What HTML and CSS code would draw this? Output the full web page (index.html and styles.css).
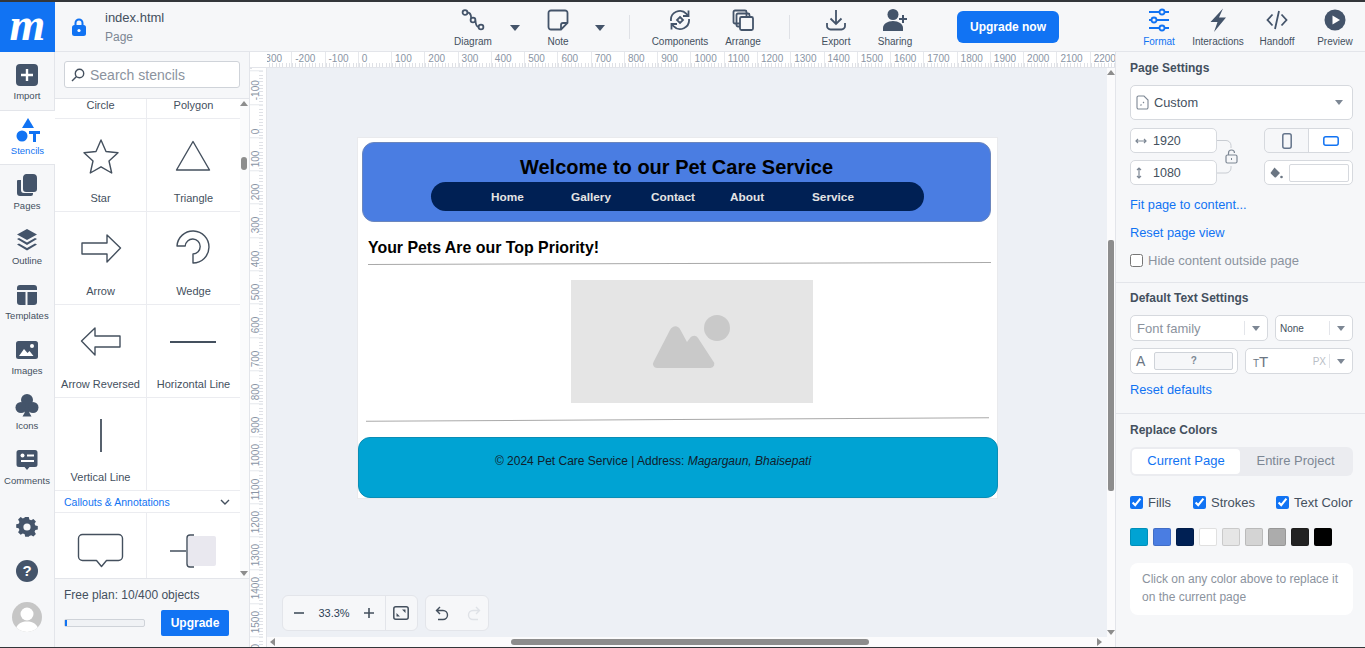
FILE: index.html

```html
<!DOCTYPE html>
<html lang="en">
<head>
  <meta charset="UTF-8">
  <title>index.html - Page</title>
  <link rel="stylesheet" href="styles.css">
</head>
<body>
  <header class="topbar">
    <div class="logo">m</div>
    <div class="file-info">
      <svg class="lock" width="14" height="18" viewBox="0 0 14 18"><path d="M3.5 8V5a3.5 3.5 0 0 1 7 0v3" fill="none" stroke="#1173f3" stroke-width="2"/><rect x="0" y="7" width="14" height="11" rx="2.5" fill="#1173f3"/><circle cx="7" cy="12.5" r="1.6" fill="#fff"/></svg>
      <div>
        <div class="file-name">index.html</div>
        <div class="file-type">Page</div>
      </div>
    </div>
    <div class="tool w50"><svg width="24" height="24" viewBox="0 0 24 24" class="ico"><circle cx="4" cy="4.5" r="2.4"/><circle cx="12" cy="12" r="2.4"/><circle cx="20" cy="19" r="2.4"/><path d="M6.5 4.5c3 0 3.500 2 3.700 5.500M14.400 12.500c.4 4 1.500 6.500 3.200 6.500"/></svg><span>Diagram</span></div>
    <div class="tool-caret w34"><i class="caret big"></i></div>
    <div class="tool w52"><svg width="24" height="24" viewBox="0 0 24 24" class="ico"><path d="M5 2.500h14a2.500 2.500 0 0 1 2.500 2.500v10l-6.500 6.500H5A2.500 2.500 0 0 1 2.500 19V5A2.500 2.500 0 0 1 5 2.500z"/><path d="M21 15h-4a2 2 0 0 0-2 2v4"/></svg><span>Note</span></div>
    <div class="tool-caret w32"><i class="caret big"></i></div>
    <div class="tool-sep first"></div>
    <div class="tool w74"><svg width="24" height="24" viewBox="0 0 24 24" class="ico"><path d="M3 13a9 9 0 0 1 15.500-7.200L20 7.500"/><path d="M20.500 2.500v5.500h-5.500"/><path d="M21 11a9 9 0 0 1-15.500 7.200L4 16.500"/><path d="M3.500 21.500V16H9"/><path d="M12 9l3 3-3 3-3-3z"/></svg><span>Components</span></div>
    <div class="tool w52"><svg width="24" height="24" viewBox="0 0 24 24" class="ico"><rect x="2.500" y="2.500" width="13" height="13" rx="1.500"/><rect x="5.500" y="5.500" width="13" height="13" rx="1.500"/><rect x="9" y="9" width="13" height="13" rx="1.500" fill="#f6f7f9"/></svg><span>Arrange</span></div>
    <div class="tool-sep second"></div>
    <div class="tool w52"><svg width="24" height="24" viewBox="0 0 24 24" class="ico"><path d="M3 15v3a3.500 3.500 0 0 0 3.500 3.500h11A3.500 3.500 0 0 0 21 18v-3"/><path d="M12 2v14M6.500 10.500L12 16l5.500-5.500"/></svg><span>Export</span></div>
    <div class="tool w66"><svg width="24" height="24" viewBox="0 0 24 24" class="ico-fill"><circle cx="10" cy="6.500" r="5.500"/><path d="M0 23v-3c0-4 4.500-7 10-7s10 3 10 7v3z"/><path d="M19 7h2v3h3v2h-3v3h-2v-3h-3v-2h3z"/></svg><span>Sharing</span></div>
    <button class="upgrade-now">Upgrade now</button>
    <div class="tool w50 format active"><svg width="24" height="24" viewBox="0 0 24 24" class="ico blue"><path d="M2 5h10M18 5h4M2 13h2M10 13h12M2 21h10M18 21h4" transform="translate(0 -1)"/><circle cx="15" cy="4" r="2.500"/><circle cx="7" cy="12" r="2.500"/><circle cx="15" cy="20" r="2.500"/></svg><span>Format</span></div>
    <div class="tool w68"><svg width="24" height="24" viewBox="0 0 24 24" class="ico-fill"><path d="M17 .5L4.500 14h7L8 24 20 9.500h-7z"/></svg><span>Interactions</span></div>
    <div class="tool w50"><svg width="24" height="24" viewBox="0 0 24 24" class="ico"><path d="M7.500 6.500L2.500 12l5 5.500M16.500 6.500l5 5.500-5 5.500M14 3l-4 18"/></svg><span>Handoff</span></div>
    <div class="tool w52 preview"><svg width="24" height="24" viewBox="0 0 24 24"><circle cx="12" cy="12" r="10.500" fill="#44546a"/><path d="M9.500 7.500l7.500 4.500-7.500 4.500z" fill="#fff"/></svg><span>Preview</span></div>
  </header>

  <div class="workspace">
    <nav class="rail">
      <div class="rail-item"><svg width="24" height="24" viewBox="0 0 24 24"><rect x="1" y="1" width="22" height="22" rx="4" fill="#44546a"/><path d="M12 6v12M6 12h12" stroke="#fff" stroke-width="2.400"/></svg><span>Import</span></div>
      <div class="rail-item active"><svg width="24" height="24" viewBox="0 0 24 24" fill="#1173f3"><path d="M12 0l6 10H6z"/><circle cx="6" cy="18" r="5.500"/><path d="M13 13h11v3h-4v8h-3v-8h-4z"/></svg><span>Stencils</span></div>
      <div class="rail-item"><svg width="24" height="24" viewBox="0 0 24 24" fill="#44546a"><path d="M3 8h3v10a3 3 0 0 0 3 3h9v1a2 2 0 0 1-2 2H5a3 3 0 0 1-3-3V9a1 1 0 0 1 1-1z" transform="translate(0 -1)"/><path d="M11 1h7a4 4 0 0 1 4 4v11a3 3 0 0 1-3 3h-8a3 3 0 0 1-3-3V5a4 4 0 0 1 3-4z"/></svg><span>Pages</span></div>
      <div class="rail-item"><svg width="24" height="24" viewBox="0 0 24 24" fill="#44546a"><path d="M12 1l10 5.500-10 5.500L2 6.500z"/><path d="M2 11l2-1 8 4.500 8-4.500 2 1-10 6z"/><path d="M2 16.500l2-1 8 4.500 8-4.500 2 1-10 6z"/></svg><span>Outline</span></div>
      <div class="rail-item"><svg width="24" height="24" viewBox="0 0 24 24" fill="#44546a"><path d="M5 2h14a3 3 0 0 1 3 3v2H2V5a3 3 0 0 1 3-3z"/><path d="M2 9h8.500v13H5a3 3 0 0 1-3-3z"/><path d="M12.500 9H22v10a3 3 0 0 1-3 3h-6.500z"/></svg><span>Templates</span></div>
      <div class="rail-item"><svg width="24" height="24" viewBox="0 0 24 24"><rect x="1" y="3" width="22" height="18" rx="2.500" fill="#44546a"/><path d="M4 18l5-7 3.500 4 2-2 4 5z" fill="#fff"/><circle cx="17" cy="8" r="2" fill="#fff"/></svg><span>Images</span></div>
      <div class="rail-item"><svg width="24" height="24" viewBox="0 0 24 24" fill="#44546a"><circle cx="12" cy="7" r="6"/><circle cx="6" cy="14.500" r="5.500"/><circle cx="18" cy="14.500" r="5.500"/><path d="M10.500 12h3l1 8 2 3.500h-9l2-3.500z"/></svg><span>Icons</span></div>
      <div class="rail-item"><svg width="24" height="24" viewBox="0 0 24 24"><path d="M4 2h16a2.500 2.500 0 0 1 2.500 2.500v12A2.500 2.500 0 0 1 20 19h-5.500L12 22l-2.500-3H4a2.500 2.500 0 0 1-2.500-2.500v-12A2.500 2.500 0 0 1 4 2z" fill="#44546a"/><circle cx="7.500" cy="7.500" r="2" fill="#fff"/><path d="M12 7.500h7M6 13h13" stroke="#fff" stroke-width="2"/></svg><span>Comments</span></div>
      <div class="rail-icon"><svg width="24" height="24" viewBox="0 0 24 24"><path d="M10 2h4l.6 2.800 2 .9 2.500-1.500 2.800 2.800-1.500 2.500.9 2 2.700.5v4l-2.700.6-.9 2 1.500 2.500-2.800 2.800-2.500-1.500-2 .8L14 24h-4l-.6-2.800-2-.8-2.500 1.500-2.800-2.800 1.500-2.500-.9-2L0 14.100v-4l2.700-.5.900-2L2.100 5l2.800-2.800 2.500 1.500 2-.9z" transform="translate(1.200 .1) scale(.9)" fill="#44546a"/><circle cx="12" cy="12" r="3.600" fill="#f6f7f9"/></svg></div>
      <div class="rail-icon"><div class="help">?</div></div>
      <div class="avatar"><svg width="30" height="30" viewBox="0 0 30 30"><circle cx="15" cy="12" r="6.500" fill="#fff"/><path d="M3 30c1-8 6-10.500 12-10.500S26 22 27 30z" fill="#fff"/></svg></div>
    </nav>

    <aside class="stencils">
      <div class="search-wrap">
        <div class="search">
          <svg width="14" height="14" viewBox="0 0 14 14" fill="none" stroke="#44505e" stroke-width="1.400"><circle cx="8.500" cy="5.500" r="4.200"/><path d="M5.500 8.500L1 13"/></svg>
          <span>Search stencils</span>
        </div>
      </div>
      <div class="stencil-list">
        <div class="stencil-grid">
          <div class="cell short"><span>Circle</span></div>
          <div class="cell short"><span>Polygon</span></div>
          <div class="cell"><svg width="60" height="60" viewBox="0 0 60 60" class="shape"><path d="M30 14l5 11.500 12 1.200-9 8.300 2.700 12L30 40.800 19.300 47 22 35l-9-8.300 12-1.200z"/></svg><span>Star</span></div>
          <div class="cell"><svg width="60" height="60" viewBox="0 0 60 60" class="shape"><path d="M30 15.500L46.500 44h-33z" transform="translate(-1 0)"/></svg><span>Triangle</span></div>
          <div class="cell"><svg width="60" height="60" viewBox="0 0 60 60" class="shape"><path d="M11 24h25v-8l13.500 13L36 43v-8H11z"/></svg><span>Arrow</span></div>
          <div class="cell"><svg width="60" height="60" viewBox="0 0 60 60" class="shape"><path d="M14 27a16 16 0 1 1 16 17v-9a7.500 7.500 0 1 0-7.800-8z" transform="translate(-1 0)"/></svg><span>Wedge</span></div>
          <div class="cell"><svg width="60" height="60" viewBox="0 0 60 60" class="shape"><path d="M49 24H24v-8L10.500 29 24 43v-8h25z"/></svg><span>Arrow Reversed</span></div>
          <div class="cell"><svg width="60" height="60" viewBox="0 0 60 60" class="shape thick"><path d="M6 30h46"/></svg><span>Horizontal Line</span></div>
          <div class="cell"><svg width="60" height="60" viewBox="0 0 60 60" class="shape thick"><path d="M30 14v33"/></svg><span>Vertical Line</span></div>
          <div class="cell"></div>
        </div>
        <div class="group-head">
          <span>Callouts &amp; Annotations</span>
          <svg width="10" height="6" viewBox="0 0 10 6" fill="none" stroke="#44505e" stroke-width="1.400"><path d="M1 1l4 4 4-4"/></svg>
        </div>
        <div class="stencil-grid">
          <div class="cell"><svg width="60" height="60" viewBox="0 0 60 60" class="shape"><path d="M12 14h36a4 4 0 0 1 4 4v18a4 4 0 0 1-4 4H36l-5 6-5-6H12a4 4 0 0 1-4-4V18a4 4 0 0 1 4-4z" transform="translate(-.500 .500)"/></svg></div>
          <div class="cell"><svg width="60" height="60" viewBox="0 0 60 60" class="shape"><rect x="24" y="16" width="28" height="30" rx="2" fill="#e9e8ef" stroke="none"/><path d="M6 31h16M30 15h-4a3 3 0 0 0-3 3v26a3 3 0 0 0 3 3h4"/></svg></div>
        </div>
        <div class="list-scroll">
          <i class="arrow-up"></i>
          <div class="list-thumb"></div>
          <i class="arrow-down"></i>
        </div>
      </div>
      <div class="plan">
        <div class="plan-text">Free plan: 10/400 objects</div>
        <div class="plan-row">
          <div class="progress"><div class="progress-fill"></div></div>
          <button class="upgrade">Upgrade</button>
        </div>
      </div>
    </aside>

    <main class="canvas-area">
      <div class="corner"></div>
      <div class="ruler-x">
        <b>-300</b><b>-200</b><b>-100</b><b>0</b><b>100</b><b>200</b><b>300</b><b>400</b><b>500</b><b>600</b><b>700</b><b>800</b><b>900</b><b>1000</b><b>1100</b><b>1200</b><b>1300</b><b>1400</b><b>1500</b><b>1600</b><b>1700</b><b>1800</b><b>1900</b><b>2000</b><b>2100</b><b>2200</b>
      </div>
      <div class="ruler-y">
        <b></b><b>-100</b><b>0</b><b>100</b><b>200</b><b>300</b><b>400</b><b>500</b><b>600</b><b>700</b><b>800</b><b>900</b><b>1000</b><b>1100</b><b>1200</b><b>1300</b><b>1400</b><b>1500</b><b>1600</b>
      </div>
      <div class="viewport">
        <div class="page">
          <div class="site-header">
            <h1>Welcome to our Pet Care Service</h1>
            <div class="site-nav"><a>Home</a><a>Gallery</a><a>Contact</a><a>About</a><a>Service</a></div>
          </div>
          <h2>Your Pets Are our Top Priority!</h2>
          <div class="rule first"></div>
          <div class="placeholder">
            <svg width="80" height="56" viewBox="0 0 80 56"><circle cx="65" cy="15" r="13" fill="#c9c9c9"/><path d="M5 55a4 4 0 0 1-3.500-6L18 17c3-5 8-5 10.500 0l6.500 12 3-4c2.500-3 6-3 8 0l15 23a4 4 0 0 1-3 7z" fill="#c9c9c9"/></svg>
          </div>
          <div class="rule second"></div>
          <div class="site-footer">© 2024 Pet Care Service | Address: <em>Magargaun, Bhaisepati</em></div>
        </div>
        <div class="zoom-box">
          <div class="zoom-group">
            <span class="zoom-btn"><svg width="12" height="12" viewBox="0 0 12 12" stroke="#44505e" stroke-width="1.600"><path d="M1 6h10"/></svg></span>
            <span class="zoom-value">33.3%</span>
            <span class="zoom-btn"><svg width="12" height="12" viewBox="0 0 12 12" stroke="#44505e" stroke-width="1.600"><path d="M1 6h10M6 1v10"/></svg></span>
            <span class="zoom-fit"><svg width="16" height="14" viewBox="0 0 16 14"><rect x=".8" y=".8" width="14.400" height="12.400" rx="2" fill="none" stroke="#44505e" stroke-width="1.500"/><path d="M9 3.500h3.500V7zM7 10.500H3.500V7z" fill="#44505e"/></svg></span>
          </div>
          <div class="undo-group">
            <svg width="14" height="15" viewBox="0 0 14 15" fill="none" stroke="#44505e" stroke-width="1.400"><path d="M5 1L1.500 4.500 5 8M2 4.500h6a4.500 4.500 0 0 1 0 9H3"/></svg>
            <svg width="14" height="15" viewBox="0 0 14 15" fill="none" stroke="#dfe2e7" stroke-width="1.400"><path d="M9 1l3.500 3.500L9 8M12 4.500H6a4.500 4.500 0 0 0 0 9h5"/></svg>
          </div>
        </div>
      </div>
      <div class="scroll-y">
        <i class="arrow-up"></i>
        <div class="scroll-y-thumb"></div>
        <i class="arrow-down"></i>
      </div>
      <div class="scroll-x">
        <i class="arrow-left"></i>
        <div class="scroll-x-thumb"></div>
        <i class="arrow-right"></i>
      </div>
    </main>

    <aside class="props">
      <section class="props-section page-settings">
        <h3>Page Settings</h3>
        <div class="field select-custom">
          <svg width="13" height="15" viewBox="0 0 13 15" fill="none" stroke="#7d8794" stroke-width="1.100"><path d="M2.500 1h5.500l4 4v7.500a1.500 1.500 0 0 1-1.500 1.500h-8A1.500 1.500 0 0 1 1 12.500v-10A1.500 1.500 0 0 1 2.500 1z"/><path d="M4.500 10.500l1-1M7 8l1-1"/></svg>
          <span>Custom</span>
          <i class="caret small push"></i>
        </div>
        <div class="size-grid">
          <div class="field size"><svg width="12" height="8" viewBox="0 0 12 8" fill="none" stroke="#7d8794" stroke-width="1.200"><path d="M1 4h10M3 2L1 4l2 2M9 2l2 2-2 2"/></svg><span>1920</span></div>
          <div class="lock-col">
            <svg width="47" height="57" viewBox="0 0 47 57" fill="none" stroke="#c8ccd2"><path d="M0 12.500h9a5 5 0 0 1 5 5V20M14 38v2a5 5 0 0 1-5 5H0"/><rect x="9" y="27" width="11" height="8" rx="1.500" stroke="#7d8794" stroke-width="1.200"/><path d="M11.500 27v-2a3 3 0 0 1 6 0" stroke="#7d8794" stroke-width="1.200"/><path d="M14.500 30v2" stroke="#7d8794"/></svg>
          </div>
          <div class="orient">
            <span class="orient-btn"><svg width="10" height="16" viewBox="0 0 10 16" fill="none" stroke="#64748b" stroke-width="1.500"><rect x=".8" y=".8" width="8.400" height="14.400" rx="2"/></svg></span>
            <span class="orient-btn on"><svg width="16" height="10" viewBox="0 0 16 10" fill="none" stroke="#1173f3" stroke-width="1.500"><rect x=".8" y=".8" width="14.400" height="8.400" rx="2"/></svg></span>
          </div>
          <div class="field size"><svg width="8" height="12" viewBox="0 0 8 12" fill="none" stroke="#7d8794" stroke-width="1.200"><path d="M4 1v10M2 3l2-2 2 2M2 9l2 2 2-2"/></svg><span class="h-value">1080</span></div>
          <div class="field fill-row">
            <svg width="13" height="12" viewBox="0 0 13 12"><path d="M4.500 .5l5.500 5.500-4 4.200a1 1 0 0 1-1.400 0L1 6.700a1 1 0 0 1 0-1.400z" fill="#6b7683"/><circle cx="11.500" cy="10" r="1.300" fill="#6b7683"/></svg>
            <div class="fill-swatch"></div>
          </div>
        </div>
        <a class="link">Fit page to content...</a>
        <a class="link">Reset page view</a>
        <label class="check muted"><input type="checkbox">Hide content outside page</label>
      </section>

      <section class="props-section text-settings">
        <h3>Default Text Settings</h3>
        <div class="text-row">
          <div class="field font-family"><span>Font family</span><i class="field-sep"></i><i class="caret small"></i></div>
          <div class="field font-none"><span>None</span><i class="field-sep"></i><i class="caret small"></i></div>
        </div>
        <div class="text-row">
          <div class="field color-a"><span class="big-a">A</span><div class="q-box">?</div></div>
          <div class="field size-t"><span class="big-t"><small>T</small>T</span><span class="px">PX</span><i class="field-sep"></i><i class="caret small"></i></div>
        </div>
        <a class="link">Reset defaults</a>
      </section>

      <section class="props-section colors">
        <h3>Replace Colors</h3>
        <div class="segment"><span class="seg on">Current Page</span><span class="seg">Entire Project</span></div>
        <div class="check-row">
          <label class="check"><input type="checkbox" checked>Fills</label>
          <label class="check"><input type="checkbox" checked>Strokes</label>
          <label class="check"><input type="checkbox" checked>Text Color</label>
        </div>
        <div class="swatches">
          <i style="background:#00a3d3"></i><i style="background:#4a7de2"></i><i style="background:#002054"></i><i style="background:#ffffff"></i><i style="background:#e6e6e6"></i><i style="background:#d4d4d4"></i><i style="background:#acacac"></i><i style="background:#222222"></i><i style="background:#000000"></i>
        </div>
        <div class="hint">Click on any color above to replace it on the current page</div>
      </section>
    </aside>
  </div>
</body>
</html>
```

FILE: styles.css

```css
* {
  box-sizing: border-box;
}
html, body {
  margin: 0;
  height: 100%;
  overflow: hidden;
}
body {
  display: flex;
  flex-direction: column;
  border-top: 2px solid #33363a;
  border-bottom: 1px solid #33363a;
  background: #f6f7f9;
  color: #44505e;
  font-family: "Liberation Sans", Arial, sans-serif;
}
svg {
  display: block;
}

/* top bar */
.topbar {
  display: flex;
  flex: none;
  height: 50px;
  border-bottom: 1px solid #e3e5ea;
}
.logo {
  width: 55px;
  height: 50px;
  background: #1173f3;
  color: #fff;
  font: italic bold 46px/46px "Liberation Serif", serif;
  text-align: center;
}
.file-info {
  display: flex;
  align-items: center;
  width: 393px;
  padding-left: 17px;
}
.lock {
  margin-right: 19px;
}
.file-name {
  font-size: 13px;
  line-height: 17px;
}
.file-type {
  margin-top: 4px;
  font-size: 12px;
  line-height: 15px;
  color: #7d8794;
}
.tool {
  display: flex;
  flex-direction: column;
  align-items: center;
  padding-top: 6px;
  font-size: 10px;
  white-space: nowrap;
}
.tool span {
  margin-top: 4px;
  line-height: 12px;
}
.tool.active {
  color: #1173f3;
}
.w32 { width: 32px; }
.w34 { width: 34px; }
.w50 { width: 50px; }
.w52 { width: 52px; }
.w66 { width: 66px; }
.w68 { width: 68px; }
.w74 { width: 74px; }
.ico {
  fill: none;
  stroke: #44546a;
  stroke-width: 1.800;
}
.ico.blue {
  stroke: #1173f3;
}
.ico-fill {
  fill: #44546a;
}
.tool-caret {
  display: flex;
  justify-content: center;
  padding-top: 23px;
}
.caret {
  display: block;
  width: 0;
  height: 0;
  border-left: 4px solid transparent;
  border-right: 4px solid transparent;
  border-top: 5px solid #7d8794;
}
.caret.big {
  border-left-width: 5px;
  border-right-width: 5px;
  border-top: 6px solid #44546a;
}
.tool-sep {
  width: 1px;
  height: 24px;
  margin-top: 13px;
  background: #dfe1e6;
}
.tool-sep.first {
  margin-left: 13px;
  margin-right: 13px;
}
.tool-sep.second {
  margin-left: 20px;
  margin-right: 20px;
}
.upgrade-now {
  width: 102px;
  height: 32px;
  margin: 9px 75px 0 29px;
  border: none;
  border-radius: 6px;
  background: #1173f3;
  color: #fff;
  font: bold 12px "Liberation Sans", Arial, sans-serif;
}
.preview {
  margin-left: 7px;
}

/* main columns */
.workspace {
  display: flex;
  flex: 1;
  min-height: 0;
}
.rail {
  flex: none;
  width: 55px;
  padding-top: 3px;
  border-right: 1px solid #e3e5ea;
}
.rail-item {
  display: flex;
  flex-direction: column;
  align-items: center;
  height: 55px;
  padding-top: 8px;
  font-size: 9.500px;
  white-space: nowrap;
}
.rail-item span {
  margin-top: 3px;
  line-height: 12px;
}
.rail-item.active {
  width: 55px;
  margin-right: -1px;
  background: #fff;
  border-top: 1px solid #e3e5ea;
  border-bottom: 1px solid #e3e5ea;
  padding-top: 7px;
  color: #1173f3;
}
.rail-icon {
  display: flex;
  justify-content: center;
  margin-top: 20px;
}
.help {
  width: 22px;
  height: 22px;
  margin-top: 1px;
  border-radius: 50%;
  background: #44546a;
  color: #fff;
  font-size: 15px;
  font-weight: bold;
  line-height: 22px;
  text-align: center;
}
.avatar {
  width: 30px;
  height: 30px;
  margin: 20px 0 0 12px;
  border-radius: 50%;
  background: #c6c6c6;
  overflow: hidden;
}

/* stencils panel */
.stencils {
  display: flex;
  flex: none;
  flex-direction: column;
  width: 195px;
  border-right: 1px solid #e3e5ea;
  background: #fff;
}
.search-wrap {
  height: 47px;
  padding: 9px 9px 0;
  background: #f6f7f9;
  border-bottom: 1px solid #e3e5ea;
}
.search {
  display: flex;
  align-items: center;
  gap: 5px;
  width: 176px;
  height: 27px;
  padding-left: 6px;
  border: 1px solid #cfd3d9;
  border-radius: 3px;
  background: #fff;
  color: #8b939e;
  font-size: 14px;
}
.stencil-list {
  position: relative;
  flex: 1;
  min-height: 0;
  overflow: hidden;
}
.stencil-grid {
  display: grid;
  grid-template-columns: 92px 93px;
  width: 185px;
}
.cell {
  display: flex;
  flex-direction: column;
  align-items: center;
  height: 93px;
  padding-top: 7px;
  border-bottom: 1px solid #ebecf0;
  font-size: 11px;
  line-height: 12px;
  white-space: nowrap;
}
.cell:nth-child(odd) {
  border-right: 1px solid #ebecf0;
}
.cell span {
  margin-top: 6px;
}
.cell.short {
  height: 20px;
  padding-top: 0;
}
.cell.short span {
  margin-top: 0;
}
.shape {
  fill: none;
  stroke: #44505e;
  stroke-width: 1.400;
  stroke-linejoin: round;
}
.shape.thick {
  stroke-width: 1.800;
}
.group-head {
  display: flex;
  align-items: center;
  justify-content: space-between;
  width: 185px;
  height: 22px;
  padding: 0 10px 0 9px;
  border-bottom: 1px solid #ebecf0;
  color: #1173f3;
  font-size: 10.500px;
}
.list-scroll {
  position: absolute;
  top: 0;
  right: 0;
  bottom: 0;
  width: 9px;
  background: #fbfbfc;
}
.list-thumb {
  position: absolute;
  top: 58px;
  left: 1px;
  width: 6px;
  height: 13px;
  border-radius: 3px;
  background: #8d8d8d;
}
.arrow-up,
.arrow-down,
.arrow-left,
.arrow-right {
  position: absolute;
  width: 0;
  height: 0;
  border: 4px solid transparent;
}
.arrow-up {
  top: 2px;
  left: 0;
  border-top: none;
  border-bottom: 5px solid #8d8d8d;
}
.arrow-down {
  bottom: 2px;
  left: 0;
  border-bottom: none;
  border-top: 5px solid #8d8d8d;
}
.arrow-left {
  top: 1px;
  left: 3px;
  border-left: none;
  border-right: 5px solid #8d8d8d;
}
.arrow-right {
  top: 1px;
  right: 13px;
  border-right: none;
  border-left: 5px solid #8d8d8d;
}
.plan {
  flex: none;
  height: 69px;
  padding: 9px 0 0 9px;
  background: #f6f7f9;
  border-top: 1px solid #e3e5ea;
}
.plan-text {
  font-size: 12px;
  line-height: 14px;
}
.plan-row {
  display: flex;
  align-items: center;
  margin-top: 8px;
}
.progress {
  width: 81px;
  height: 8px;
  border: 1px solid #cfd3d9;
  border-radius: 2px;
  background: #f0f2f5;
}
.progress-fill {
  width: 2px;
  height: 6px;
  background: #1173f3;
}
.upgrade {
  width: 68px;
  height: 26px;
  margin-left: 16px;
  border: none;
  border-radius: 2px;
  background: #1173f3;
  color: #fff;
  font: bold 12px "Liberation Sans", Arial, sans-serif;
}

/* canvas with rulers */
.canvas-area {
  display: grid;
  flex: 1;
  grid-template-columns: 17px 1fr 8px;
  grid-template-rows: 16px 1fr 10px;
  min-width: 0;
  background: #edf0f5;
}
.corner {
  background: #fff;
  border-bottom: 1px solid #e3e5ea;
}
.ruler-x {
  display: flex;
  overflow: hidden;
  background: #fff;
  border-bottom: 1px solid #e3e5ea;
  grid-column: 2 / 4;
}
.ruler-x b {
  flex: none;
  width: 33.280px;
  padding: 1px 0 0 3px;
  border-left: 1px solid #e6e8ec;
  color: #8a95a5;
  font-size: 10px;
  font-weight: normal;
  line-height: 11px;
  background: repeating-linear-gradient(90deg, #dfe1e6 0 1px, transparent 1px 3.328px) 0 100% / 100% 4px no-repeat;
}
.ruler-x b:first-child {
  margin-left: -9px;
}
.ruler-y {
  grid-row: 2 / 4;
  overflow: hidden;
  background: #fff;
  border-right: 1px solid #e3e5ea;
}
.ruler-y b {
  display: block;
  height: 33.280px;
  padding: 3px 0 0 2px;
  border-bottom: 1px solid #e6e8ec;
  color: #8a95a5;
  font-size: 10px;
  font-weight: normal;
  line-height: 11px;
  writing-mode: vertical-rl;
  transform: rotate(180deg);
  background: repeating-linear-gradient(0deg, #dfe1e6 0 1px, transparent 1px 3.328px) 0 0 / 4px 100% no-repeat;
}
.ruler-y b:first-child {
  margin-top: -30.900px;
}
.viewport {
  position: relative;
  overflow: hidden;
}
.page {
  position: absolute;
  left: 91px;
  top: 70px;
  width: 639px;
  height: 360px;
  padding: 4px 6px 0 4px;
  background: #fff;
  box-shadow: 0 0 0 1px #e9eaed;
  color: #000;
}
.site-header {
  height: 80px;
  padding-top: 13px;
  border: 1px solid #6b86bd;
  border-radius: 12px;
  background: #4a7de2;
  text-align: center;
}
h1 {
  margin: 0;
  font-size: 20px;
  line-height: 23px;
}
.site-nav {
  display: grid;
  grid-template-columns: 80px 80px 79px 82px auto;
  align-items: center;
  width: 493px;
  height: 29px;
  margin: 3px 0 0 68px;
  padding-left: 60px;
  border-radius: 15px;
  background: #002054;
  color: #e4e4e4;
  font-size: 11.800px;
  font-weight: bold;
  text-align: left;
}
h2 {
  margin: 16px 0 0 6px;
  font-size: 15.900px;
  line-height: 20px;
}
.rule {
  height: 1px;
  background: #a9a9a9;
}
.rule.first {
  margin: 5px 0 0 6px;
  transform: rotate(-0.2deg);
}
.rule.second {
  margin: 16px 2px 0 4px;
  transform: rotate(-0.3deg);
}
.placeholder {
  display: flex;
  align-items: flex-end;
  justify-content: center;
  width: 242px;
  height: 123px;
  margin: 16px 0 0 209px;
  padding: 0 0 34px 0;
  background: #e5e5e5;
}
.site-footer {
  width: 640px;
  height: 61px;
  margin: 17px 0 0 -4px;
  padding: 16px 50px 0 0;
  border: 1px solid #0a8db5;
  border-radius: 12px;
  background: #00a3d3;
  color: #11202c;
  font-size: 12px;
  line-height: 14px;
  text-align: center;
}

/* floating zoom controls */
.zoom-box {
  position: absolute;
  left: 15px;
  top: 527px;
  display: flex;
  gap: 7px;
}
.zoom-group,
.undo-group {
  display: flex;
  align-items: center;
  height: 36px;
  border: 1px solid #e3e5ea;
  border-radius: 6px;
  background: #f6f7f9;
}
.zoom-group {
  width: 136px;
  padding-left: 10px;
}
.zoom-btn {
  flex: none;
  width: 12px;
}
.zoom-value {
  width: 58px;
  color: #2c3f56;
  font-size: 11px;
  text-align: center;
}
.zoom-fit {
  height: 34px;
  margin-left: 10px;
  padding: 10px 0 0 7px;
  border-left: 1px solid #e3e5ea;
}
.undo-group {
  gap: 18px;
  width: 64px;
  padding-left: 9px;
}
.scroll-y {
  position: relative;
  background: #fbfbfc;
}
.scroll-y-thumb {
  position: absolute;
  top: 172px;
  left: 1px;
  width: 6px;
  height: 251px;
  border-radius: 2px;
  background: #8d8d8d;
}
.scroll-x {
  position: relative;
  grid-column: 2 / 4;
  background: #fbfbfc;
}
.scroll-x-thumb {
  position: absolute;
  top: 2px;
  left: 244px;
  width: 358px;
  height: 6px;
  border-radius: 3px;
  background: #8d8d8d;
}

/* right panel */
.props {
  flex: none;
  width: 250px;
  border-left: 1px solid #e3e5ea;
  font-size: 12px;
}
.props-section {
  padding: 0 12px 0 14px;
  border-bottom: 1px solid #e3e5ea;
}
.props-section:last-child {
  border-bottom: none;
}
h3 {
  margin: 0;
  font-size: 12px;
  line-height: 14px;
}
.page-settings {
  height: 231px;
  padding-top: 9px;
}
.text-settings {
  height: 131px;
  padding-top: 8px;
}
.colors {
  padding-top: 9px;
}
.field {
  display: flex;
  align-items: center;
  border: 1px solid #d6d9de;
  border-radius: 5px;
  background: #fff;
}
.select-custom {
  gap: 5px;
  height: 35px;
  margin-top: 10px;
  padding: 0 9px 0 5px;
  font-size: 12.800px;
}
.push {
  margin-left: auto;
}
.size-grid {
  display: grid;
  grid-template-columns: 87px 47px 89px;
  grid-template-rows: 25px 25px;
  row-gap: 7px;
  margin-top: 8px;
}
.size {
  gap: 6px;
  padding-left: 4px;
  font-size: 12.500px;
}
.h-value {
  margin-left: 4px;
}
.lock-col {
  grid-row: 1 / 3;
  grid-column: 2;
}
.orient {
  display: flex;
  overflow: hidden;
  border: 1px solid #d6d9de;
  border-radius: 5px;
}
.orient-btn {
  display: flex;
  flex: 1;
  align-items: center;
  justify-content: center;
}
.orient-btn.on {
  border-left: 1px solid #d6d9de;
  background: #fff;
}
.fill-row {
  gap: 6px;
  padding-left: 5px;
}
.fill-swatch {
  width: 60px;
  height: 18px;
  border: 1px solid #d6d9de;
  border-radius: 2px;
}
.link {
  display: block;
  color: #1173f3;
  font-size: 12.800px;
  line-height: 15px;
}
.page-settings .link {
  margin-top: 13px;
}
.size-grid + .link {
  margin-top: 12px;
}
.check {
  display: flex;
  align-items: center;
  font-size: 13px;
  line-height: 15px;
  white-space: nowrap;
}
.check input {
  width: 13px;
  height: 13px;
  margin: 0 5px 0 0;
  accent-color: #1173f3;
}
.check.muted {
  margin-top: 13px;
  color: #8b939e;
}
.text-row {
  display: flex;
  gap: 7px;
  margin-top: 7px;
}
.text-settings h3 + .text-row {
  margin-top: 10px;
}
.text-row .field {
  height: 26px;
}
.font-family {
  width: 138px;
  padding: 0 7px 0 6px;
  color: #8b939e;
  font-size: 13px;
}
.font-none {
  width: 78px;
  padding: 0 7px 0 4px;
  font-size: 10px;
}
.field-sep {
  width: 1px;
  height: 14px;
  margin: 0 7px 0 auto;
  background: #e3e5ea;
}
.color-a {
  gap: 9px;
  width: 108px;
  padding-left: 5px;
}
.big-a {
  color: #6b7683;
  font-size: 14px;
}
.q-box {
  width: 79px;
  height: 18px;
  border: 1px solid #cfd3d9;
  border-radius: 2px;
  background: #f6f7f9;
  color: #7d8794;
  font-size: 10px;
  font-weight: bold;
  line-height: 16px;
  text-align: center;
}
.size-t {
  width: 108px;
  padding: 0 7px 0 7px;
}
.big-t {
  color: #6b7683;
  font-size: 15px;
}
.big-t small {
  font-size: 10px;
}
.px {
  margin-left: auto;
  color: #b9bec6;
  font-size: 10px;
}
.px + .field-sep {
  margin-left: 3px;
}
.text-settings .link {
  margin-top: 8px;
}
.segment {
  display: flex;
  width: 223px;
  height: 29px;
  margin-top: 10px;
  padding: 2px;
  border-radius: 6px;
  background: #ebecf0;
  font-size: 13px;
}
.seg {
  flex: 1;
  color: #7d8794;
  line-height: 24px;
  text-align: center;
}
.seg.on {
  flex: none;
  width: 108px;
  border-radius: 4px;
  background: #fff;
  color: #1173f3;
}
.check-row {
  display: flex;
  margin-top: 19px;
}
.check-row .check:nth-child(1) {
  width: 63px;
}
.check-row .check:nth-child(2) {
  width: 83px;
}
.swatches {
  display: flex;
  gap: 5px;
  margin-top: 18px;
}
.swatches i {
  width: 18px;
  height: 18px;
  border: 1px solid rgba(0, 0, 0, 0.12);
  border-radius: 2px;
}
.hint {
  width: 223px;
  height: 52px;
  margin-top: 17px;
  padding: 7px 12px;
  border-radius: 8px;
  background: #fff;
  color: #8b939e;
  font-size: 12px;
  line-height: 18px;
}
```
